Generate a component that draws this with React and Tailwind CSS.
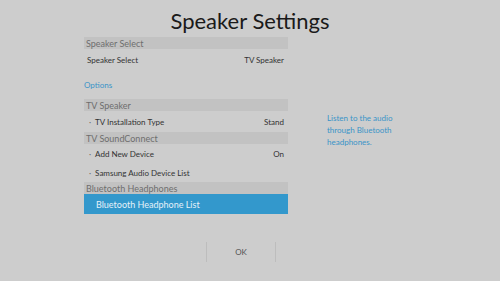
export default function App() {
  const font = { fontFamily: 'Lato, "Open Sans", sans-serif' };
  const Header = ({ children }) => (
    <div className="h-[12px] bg-[#c2c2c2] flex items-center pl-[2px] text-[9px] text-[#6e6e6e] leading-none">{children}</div>
  );
  const Row = ({ label, value, bullet, h }) => (
    <div className={`flex items-center justify-between pl-[5px] pr-[4px] text-[8px] text-[#333] leading-none ${h}`}>
      <div className="flex items-center">
        {bullet && <span className="mr-[4px] text-[#666]">·</span>}
        <span>{label}</span>
      </div>
      {value && <span>{value}</span>}
    </div>
  );
  return (
    <div className="w-[500px] h-[281px] bg-[#cdcdcd] overflow-hidden flex flex-col" style={font}>
      <div className="h-[37px] flex items-center justify-center text-[22px] text-[#1a1a1a] leading-none pt-[4px]">Speaker Settings</div>
      <div className="flex">
        <div className="ml-[84px] w-[204px] flex flex-col">
          <Header>Speaker Select</Header>
          <div className="h-[22px] flex items-center justify-between pl-[3px] pr-[4px] text-[8px] text-[#333] leading-none">
            <span>Speaker Select</span>
            <span>TV Speaker</span>
          </div>
          <div className="h-[28px] flex items-center text-[8px] text-[#3a94c8] leading-none">Options</div>
          <Header>TV Speaker</Header>
          <Row label="TV Installation Type" value="Stand" bullet h="h-[21px]" />
          <Header>TV SoundConnect</Header>
          <Row label="Add New Device" value="On" bullet h="h-[19px]" />
          <Row label="Samsung Audio Device List" bullet h="h-[19px]" />
          <Header>Bluetooth Headphones</Header>
          <div className="h-[20px] bg-[#3398cc] flex items-center pl-[12px] text-[9px] text-[#e6f1f8] leading-none">Bluetooth Headphone List</div>
        </div>
        <div className="ml-[39px] mt-[75px] w-[70px] text-[8px] leading-[12px] text-[#3a94c8]">
          Listen to the audio through Bluetooth headphones.
        </div>
      </div>
      <div className="mt-[28px] ml-[206px] w-[70px] h-[20px] border-x border-[#bdbdbd] flex items-center justify-center text-[8px] text-[#555] leading-none">OK</div>
    </div>
  );
}
